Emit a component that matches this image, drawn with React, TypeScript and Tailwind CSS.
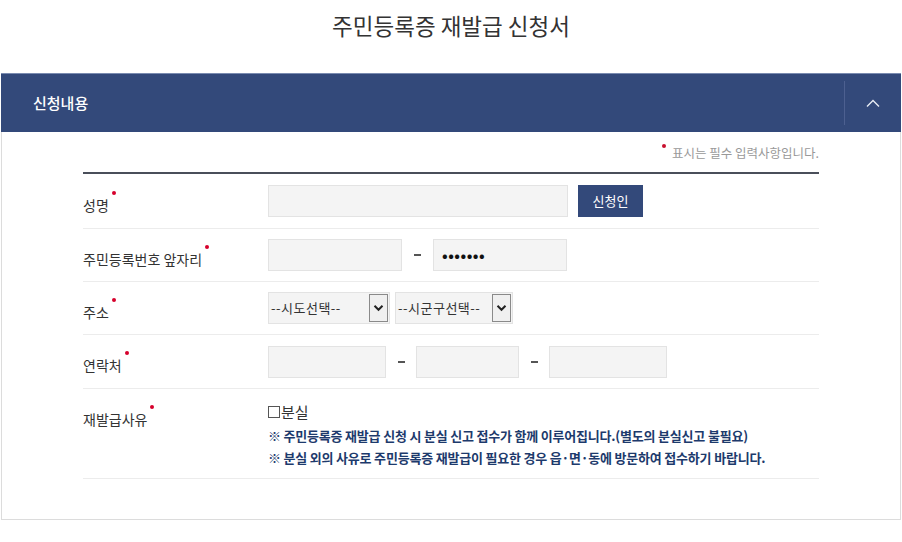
import React from "react";

const font = { fontFamily: '"Noto Sans CJK KR", "Noto Sans", sans-serif' };

function Label({ text, className = "" }: { text: string; className?: string }) {
  return (
    <div className={`w-[185px] shrink-0 ${className}`}>
      <span className="relative inline-block text-[14px] leading-[20px] text-[#333]">
        {text}
        <span className="absolute -right-[7px] -top-[4px] h-[4px] w-[4px] rounded-full bg-[#d6002c]" />
      </span>
    </div>
  );
}

function Input({ w, children }: { w: string; children?: React.ReactNode }) {
  return (
    <div className={`${w} flex h-[32px] items-center border border-[#e3e3e3] bg-[#f4f4f4] px-[8px]`}>
      {children}
    </div>
  );
}

function Dash({ w }: { w: string }) {
  return (
    <div className={`${w} flex items-center justify-center`}>
      <span className="block h-[2px] w-[7px] bg-[#555]" />
    </div>
  );
}

function Select({ w, text }: { w: string; text: string }) {
  return (
    <div className={`${w} flex h-[32px] items-center justify-between border border-[#e3e3e3] bg-[#f4f4f4] pl-[2px] pr-[1px]`}>
      <span className="text-[13px] tracking-[0.5px] text-[#333]">{text}</span>
      <span className="flex h-[28px] w-[19px] items-center justify-center border border-[#8a8a8a] bg-[#f0f0f0]">
        <svg width="11" height="8" viewBox="0 0 11 8">
          <path d="M1.5 1.8 L5.5 5.8 L9.5 1.8" fill="none" stroke="#222" strokeWidth="2" />
        </svg>
      </span>
    </div>
  );
}

export default function App() {
  return (
    <div className="min-h-[542px] w-[902px] bg-white" style={font}>
      <div className="pt-[10px] text-center text-[22.5px] leading-[30px] text-[#333]">
        주민등록증 재발급 신청서
      </div>
      <div className="mx-[1px] mt-[33px] border-x border-b border-[#dcdcdc]">
        <div className="-mx-[1px] flex h-[59px] items-center border-t border-[#7a8bb0] bg-[#33497a]">
          <div className="flex-1 pl-[32px] text-[15px] font-medium text-white">신청내용</div>
          <div className="flex h-[44px] w-[57px] items-center justify-center border-l border-[#4d6090]">
            <svg width="14" height="9" viewBox="0 0 14 9">
              <path d="M1 7.5 L7 1.5 L13 7.5" fill="none" stroke="#e8ecf4" strokeWidth="1.4" />
            </svg>
          </div>
        </div>
        <div className="px-[81px] pb-[40px] pt-[12px]">
          <div className="flex justify-end">
            <span className="relative text-[12.5px] leading-[18px] text-[#999]">
              <span className="absolute -left-[10px] top-[0px] h-[4px] w-[4px] rounded-full bg-[#c8102e]" />
              표시는 필수 입력사항입니다.
            </span>
          </div>
          <div className="mt-[10px] border-t-2 border-[#4a4f5a]">
            <div className="flex h-[55px] items-center border-b border-[#ececec]">
              <Label text="성명" className="mt-[5px]" />
              <Input w="w-[300px]" />
              <div className="ml-[10px] flex h-[32px] w-[65px] items-center justify-center bg-[#33497a] text-[13px] text-white">
                신청인
              </div>
            </div>
            <div className="flex h-[53px] items-center border-b border-[#ececec]">
              <Label text="주민등록번호 앞자리" className="mt-[5px]" />
              <Input w="w-[134px]" />
              <Dash w="w-[31px]" />
              <Input w="w-[134px]">
                <span className="text-[15px] font-bold tracking-[0.5px] text-[#111]">•••••••</span>
              </Input>
            </div>
            <div className="flex h-[53px] items-center border-b border-[#ececec]">
              <Label text="주소" className="mt-[5px]" />
              <Select w="w-[122px]" text="--시도선택--" />
              <div className="w-[5px]" />
              <Select w="w-[118px]" text="--시군구선택--" />
            </div>
            <div className="flex h-[54px] items-center border-b border-[#ececec]">
              <Label text="연락처" className="mt-[5px]" />
              <Input w="w-[118px]" />
              <Dash w="w-[30px]" />
              <Input w="w-[103px]" />
              <Dash w="w-[30px]" />
              <Input w="w-[118px]" />
            </div>
            <div className="flex h-[90px] items-start border-b border-[#ececec] pt-[17px]">
              <Label text="재발급사유" className="mt-[0px]" />
              <div className="-mt-[6px]">
                <div className="flex items-center text-[15px] leading-[24px] text-[#333]">
                  <span className="mr-[1px] inline-block h-[12px] w-[12px] border border-[#555] bg-white" />
                  분실
                </div>
                <div className="mt-[1px] text-[13px] font-bold leading-[22px] tracking-[-0.2px] text-[#1d3a6c]">
                  ※ 주민등록증 재발급 신청 시 분실 신고 접수가 함께 이루어집니다.(별도의 분실신고 불필요)
                </div>
                <div className="text-[13px] font-bold leading-[22px] tracking-[-0.2px] text-[#1d3a6c]">
                  ※ 분실 외의 사유로 주민등록증 재발급이 필요한 경우 읍·면·동에 방문하여 접수하기 바랍니다.
                </div>
              </div>
            </div>
          </div>
        </div>
      </div>
    </div>
  );
}
